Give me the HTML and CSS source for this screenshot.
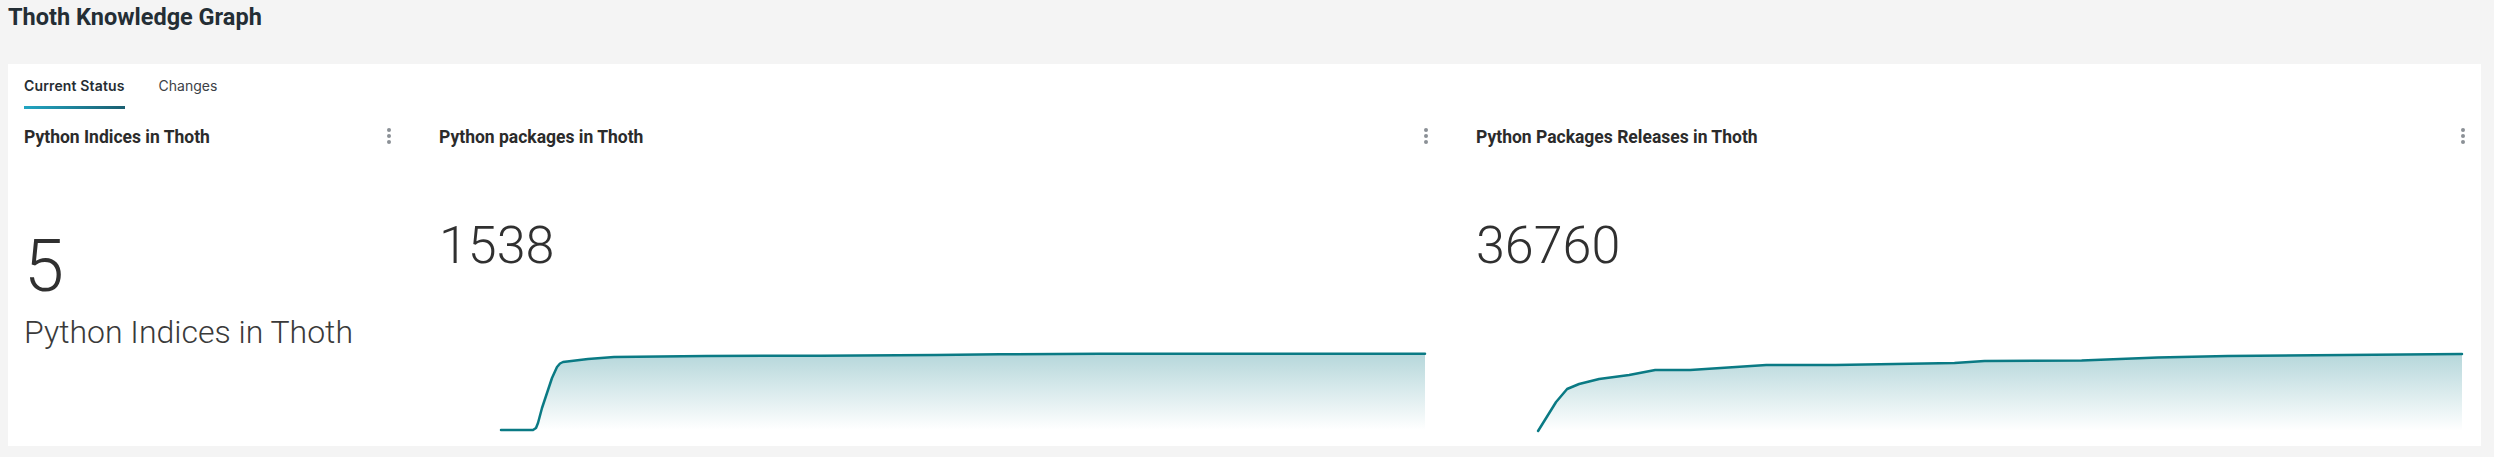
FILE: index.html
```html
<!DOCTYPE html>
<html lang="en">
<head>
<meta charset="utf-8">
<title>Thoth Knowledge Graph</title>
<link rel="stylesheet" href="styles.css">
</head>
<body>
<h1 class="page-title">Thoth Knowledge Graph</h1>
<main class="card">
  <nav class="tabs">
    <div class="tab tab-active">Current Status</div>
    <div class="tab">Changes</div>
  </nav>
  <section class="panels">
    <article class="panel">
      <header class="panel-head">
        <h2 class="panel-title">Python Indices in Thoth</h2>
        <div class="kebab"><span></span><span></span><span></span></div>
      </header>
      <div class="big-num big-num-xl">5</div>
      <div class="big-label">Python Indices in Thoth</div>
    </article>
    <article class="panel">
      <header class="panel-head">
        <h2 class="panel-title">Python packages in Thoth</h2>
        <div class="kebab"><span></span><span></span><span></span></div>
      </header>
      <div class="big-num">1538</div>
      <svg class="spark" viewBox="0 0 989 100" preserveAspectRatio="none">
        <defs>
          <linearGradient id="g1" x1="0" y1="0" x2="0" y2="1">
            <stop offset="0" stop-color="#0a7a86" stop-opacity="0.3"/>
            <stop offset="1" stop-color="#0a7a86" stop-opacity="0"/>
          </linearGradient>
        </defs>
        <path fill="url(#g1)" d="M62,90 L94,90 L97,88 L99,83 L103,68 L108,53 L113,38 L118,27 L121,23.5 L124,22 L149,19 L175,17 L267,16 L382,15.7 L497,15 L561,14.3 L661,13.7 L986,13.7 L986,90 Z"/>
        <polyline class="spark-line" points="62,90 94,90 97,88 99,83 103,68 108,53 113,38 118,27 121,23.5 124,22 149,19 175,17 267,16 382,15.7 497,15 561,14.3 661,13.7 986,13.7"/>
      </svg>
    </article>
    <article class="panel">
      <header class="panel-head">
        <h2 class="panel-title">Python Packages Releases in Thoth</h2>
        <div class="kebab"><span></span><span></span><span></span></div>
      </header>
      <div class="big-num">36760</div>
      <svg class="spark" viewBox="0 0 988 100" preserveAspectRatio="none">
        <defs>
          <linearGradient id="g2" x1="0" y1="0" x2="0" y2="1">
            <stop offset="0" stop-color="#0a7a86" stop-opacity="0.3"/>
            <stop offset="1" stop-color="#0a7a86" stop-opacity="0"/>
          </linearGradient>
        </defs>
        <path fill="url(#g2)" d="M62,91 L80,62 L91,49 L103,44 L123,39 L153,35 L179,30 L214,30 L290,25 L359,25 L478,23 L508,21 L605,20.5 L681,17.5 L751,16 L985,14 L985,90 L62,91 Z"/>
        <polyline class="spark-line" points="62,91 80,62 91,49 103,44 123,39 153,35 179,30 214,30 290,25 359,25 478,23 508,21 605,20.5 681,17.5 751,16 985,14"/>
      </svg>
    </article>
  </section>
</main>
</body>
</html>
```
FILE: styles.css
```css
html, body {
  margin: 0;
  padding: 0;
}
body {
  background: #f4f4f4;
  font-family: Roboto, "Liberation Sans", sans-serif;
  color: #333;
}
.page-title {
  margin: 0;
  padding: 6px 0 0 8px;
  font-family: Roboto, "Liberation Sans", sans-serif;
  font-weight: 700;
  font-size: 23.5px;
  line-height: 23px;
  color: #242e35;
}
.card {
  margin: 35px 13px 0 8px;
  height: 382px;
  background: #fff;
  padding: 0 16px;
  box-sizing: border-box;
  overflow: hidden;
}
.tabs {
  display: flex;
  gap: 34px;
}
.tab {
  padding: 15px 0 13px;
  font-family: Inter, "Liberation Sans", sans-serif;
  font-size: 14px;
  line-height: 14px;
  color: #3c4146;
  border-bottom: 3px solid transparent;
}
.tab-active {
  font-weight: 600;
  letter-spacing: 0.15px;
  color: #262d33;
  border-image: linear-gradient(90deg, #22a6c3, #1a5e70) 1;
}
.panels {
  display: grid;
  grid-template-columns: 367px 989px 1fr;
  column-gap: 48px;
}
.panel {
  padding-top: 19px;
  display: flex;
  flex-direction: column;
  min-width: 0;
}
.panel-head {
  display: flex;
  justify-content: space-between;
  align-items: flex-start;
  height: 18px;
}
.panel-title {
  margin: 0;
  font-size: 17.5px;
  line-height: 18px;
  font-weight: 700;
  color: #2b2b2b;
}
.kebab {
  display: flex;
  flex-direction: column;
  gap: 2px;
  width: 4px;
}
.kebab span {
  width: 4px;
  height: 4px;
  border-radius: 50%;
  background: #8b9096;
}
.big-num {
  margin-top: 74px;
  font-size: 52px;
  line-height: 52px;
  font-weight: 300;
  color: #303030;
}
.big-num-xl {
  margin-top: 85px;
  font-size: 72px;
  line-height: 72px;
}
.big-label {
  margin-top: 13px;
  font-size: 32px;
  line-height: 32px;
  font-weight: 300;
  color: #3a3a3a;
}
.spark {
  display: block;
  margin-top: 68px;
  width: 100%;
  height: 100px;
}
.spark-line {
  fill: none;
  stroke: #0a7a84;
  stroke-width: 2.5;
  stroke-linejoin: round;
  stroke-linecap: round;
}
```
